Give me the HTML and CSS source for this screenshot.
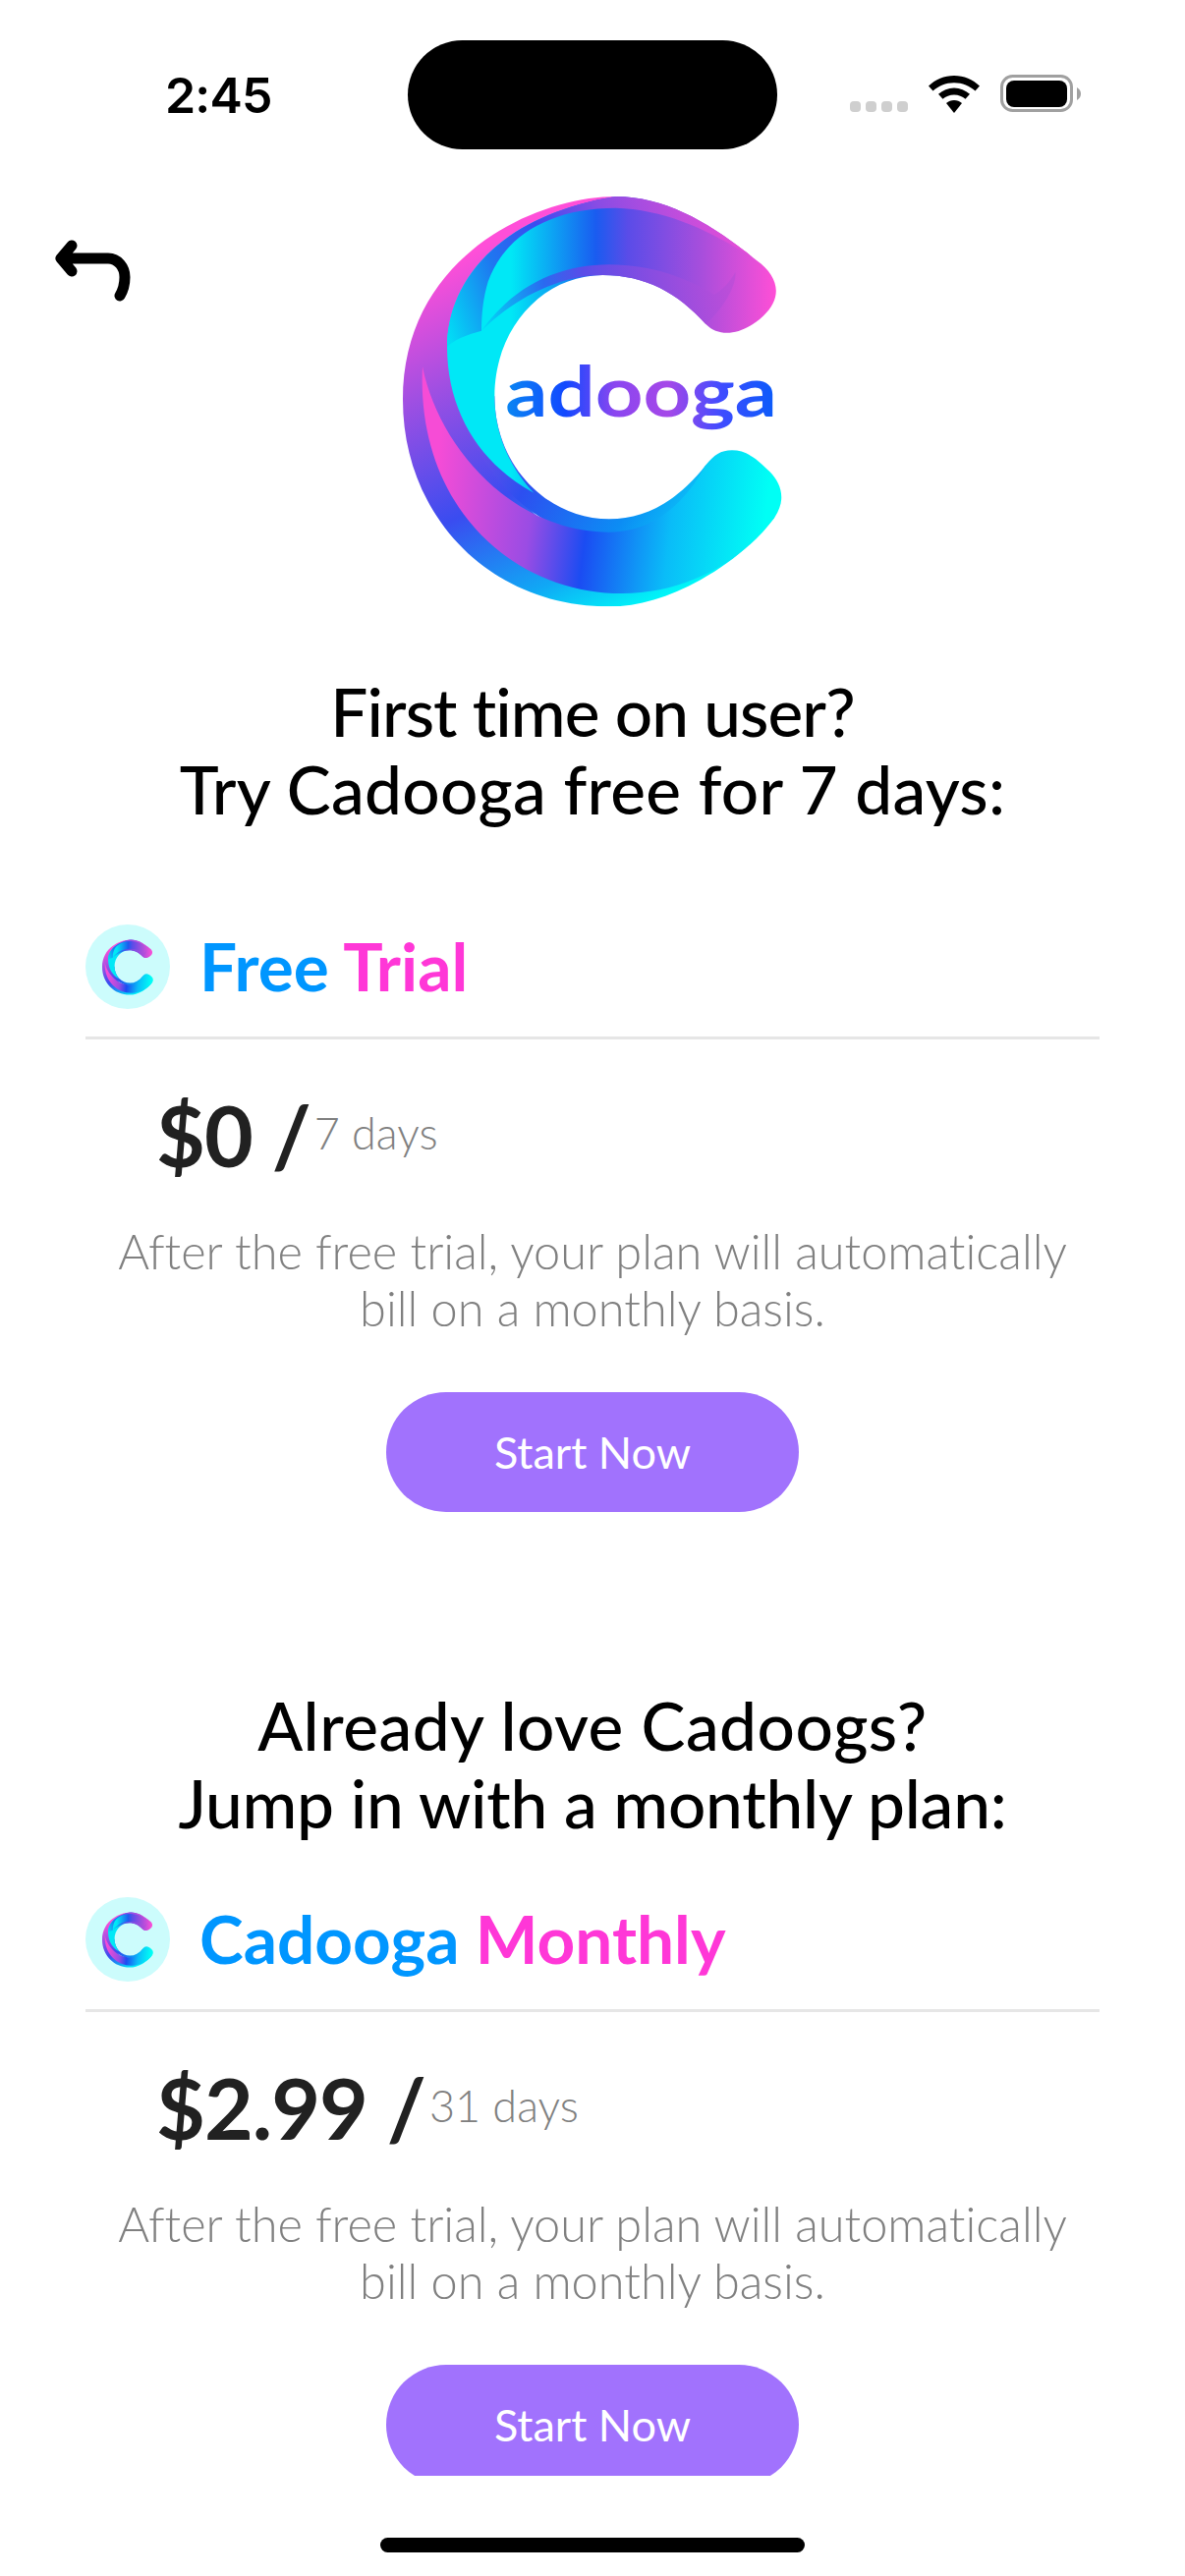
FILE: index.html
```html
<!DOCTYPE html>
<html lang="en">
<head>
<meta charset="utf-8">
<title>Cadooga plans</title>
<link rel="stylesheet" href="styles.css">
</head>
<body>
<svg class="defs" width="0" height="0" aria-hidden="true">
  <defs>
    <linearGradient id="gBack" x1="300" y1="230" x2="800" y2="1320" gradientUnits="userSpaceOnUse">
      <stop offset="0" stop-color="#ff4fd8"/>
      <stop offset=".28" stop-color="#a04fe2"/>
      <stop offset=".6" stop-color="#3a4cf0"/>
      <stop offset=".85" stop-color="#10a8f5"/>
      <stop offset="1" stop-color="#00f6f8"/>
    </linearGradient>
    <linearGradient id="gBottom" x1="190" y1="900" x2="1200" y2="1030" gradientUnits="userSpaceOnUse">
      <stop offset="0" stop-color="#f64cd6"/>
      <stop offset=".3" stop-color="#9a4ce4"/>
      <stop offset=".47" stop-color="#1b4cf2"/>
      <stop offset=".72" stop-color="#0abcf8"/>
      <stop offset="1" stop-color="#00fff5"/>
    </linearGradient>
    <linearGradient id="gStrip" x1="230" y1="640" x2="1000" y2="1060" gradientUnits="userSpaceOnUse">
      <stop offset="0" stop-color="#a04ee2"/>
      <stop offset=".4" stop-color="#2d4ff0"/>
      <stop offset=".75" stop-color="#0c8cf4"/>
      <stop offset="1" stop-color="#0ad0f8"/>
    </linearGradient>
    <linearGradient id="gTop" x1="420" y1="340" x2="1230" y2="340" gradientUnits="userSpaceOnUse">
      <stop offset="0" stop-color="#00e8f6"/>
      <stop offset=".32" stop-color="#1a5cf0"/>
      <stop offset=".44" stop-color="#5a4ce8"/>
      <stop offset=".72" stop-color="#a84edc"/>
      <stop offset="1" stop-color="#ff4fd6"/>
    </linearGradient>
    <linearGradient id="gTopEdge" x1="225" y1="500" x2="1100" y2="200" gradientUnits="userSpaceOnUse">
      <stop offset="0" stop-color="#00e0f6"/>
      <stop offset=".22" stop-color="#1e78f0"/>
      <stop offset=".4" stop-color="#3a4cf0"/>
      <stop offset=".62" stop-color="#8a4ce4"/>
      <stop offset="1" stop-color="#e04ed8"/>
    </linearGradient>
    <linearGradient id="gTopShade" x1="330" y1="420" x2="1100" y2="300" gradientUnits="userSpaceOnUse">
      <stop offset="0" stop-color="#00d8f6"/>
      <stop offset=".26" stop-color="#2a6af0"/>
      <stop offset=".42" stop-color="#5a4ce8"/>
      <stop offset="1" stop-color="#c04ed8"/>
    </linearGradient>
    <linearGradient id="gWord" x1="405" y1="0" x2="1230" y2="0" gradientUnits="userSpaceOnUse">
      <stop offset="0" stop-color="#0a86f2"/>
      <stop offset=".22" stop-color="#1248ff"/>
      <stop offset=".4" stop-color="#8a46f0"/>
      <stop offset=".6" stop-color="#a548e8"/>
      <stop offset=".8" stop-color="#3e4cff"/>
      <stop offset="1" stop-color="#0a5cfa"/>
    </linearGradient>
    <symbol id="cMark" viewBox="90 60 1160 1252">
      <path fill="url(#gBack)" d="M740 60C500 60 90 240 90 680C90 1030 350 1312 720 1312C810 1312 900 1285 1000 1230C1090 1180 1160 1120 1225 1040L720 1180C500 1100 300 850 300 600C300 400 500 120 740 60Z"/>
      <path fill="url(#gStrip)" d="M225 560L370 670C370 880 530 1045 720 1045C830 1045 930 990 1015 880L1030 920C950 1040 830 1100 720 1100C480 1100 280 880 225 560Z"/>
      <path fill="url(#gBottom)" d="M150 580C200 830 430 1085 720 1085C850 1085 950 1000 1015 880C1040 850 1060 835 1095 835C1135 835 1165 855 1210 900C1245 935 1262 985 1225 1040C1130 1170 960 1272 760 1272C420 1272 130 1000 150 580Z"/>
      <path fill="url(#gTop)" d="M225 520C225 330 370 120 740 60C900 60 1040 150 1170 255C1240 305 1250 370 1190 425C1130 480 1060 495 1015 450C930 355 830 300 700 300C520 300 370 460 370 670C370 790 420 890 490 965C330 880 225 720 225 520Z"/>
      <path fill="url(#gTopEdge)" d="M225 520C225 330 370 120 740 60C900 60 1040 150 1170 255C1040 170 900 100 740 95C540 95 400 180 350 320C335 370 330 420 330 470C290 480 240 500 225 520Z"/>
      <path fill="url(#gTopShade)" d="M330 470C430 330 570 268 720 268C850 268 960 310 1040 360C1060 350 1090 320 1105 290C1110 330 1070 400 1015 450C930 355 830 300 700 300C560 300 420 380 330 470Z"/>
    </symbol>
  </defs>
</svg>

<main class="screen">
  <header class="status">
    <div class="status-left"><span class="time">2:45</span></div>
    <div class="island"></div>
    <div class="status-right">
      <div class="signal"><i></i><i></i><i></i><i></i></div>
      <svg class="wifi" viewBox="0 0 52 38" aria-hidden="true">
        <path d="M26 0C16 0 7 4 0 10.500L4.500 15.500C10 10.500 17.500 7.200 26 7.200S42 10.500 47.500 15.500L52 10.500C45 4 36 0 26 0Z"/>
        <path d="M26 12.500C20 12.500 14.500 14.800 10 18.800L14.500 23.800C17.500 21.200 21.500 19.600 26 19.600S34.500 21.200 37.500 23.800L42 18.800C37.500 14.800 32 12.500 26 12.500Z"/>
        <path d="M26 25C23 25 20.300 26 18 28L26 38L34 28C31.700 26 29 25 26 25Z"/>
      </svg>
      <svg class="battery" viewBox="0 0 82 39" aria-hidden="true">
        <rect x="1.500" y="1.500" width="71" height="35" rx="11" fill="none" stroke="#a0a0a0" stroke-width="3"/>
        <rect x="6" y="6" width="62" height="27" rx="8"/>
        <path d="M78 13V26C81 24 82 22 82 19.500C82 17 81 15 78 13Z" fill="#a0a0a0"/>
      </svg>
    </div>
  </header>

  <div class="hero">
    <button class="back" type="button" aria-label="Back">
      <svg viewBox="0 0 90 80" aria-hidden="true">
        <path d="M20 8L9 21L20 34M9 21H57C67 21 74 30 74 40C74 48 72 54 69 59"/>
      </svg>
    </button>
    <svg class="logo" viewBox="0 0 1338 1380" role="img" aria-label="Cadooga logo">
      <use href="#cMark" x="90" y="60" width="1160" height="1252"/>
      <text class="logo-word" x="403" y="733" textLength="830" lengthAdjust="spacingAndGlyphs" fill="url(#gWord)">adooga</text>
    </svg>
  </div>

  <h2 class="intro intro-first"><span class="line-a">First time on user?</span><br><span class="line-b">Try Cadooga free for 7 days:</span></h2>
  <section class="plan">
    <div class="plan-head">
      <div class="badge"><svg viewBox="0 0 52 65" preserveAspectRatio="none" aria-hidden="true"><use href="#cMark" width="52" height="65"/></svg></div>
      <h3 class="plan-name"><span class="blue">Free</span> <span class="pink">Trial</span></h3>
    </div>
    <div class="price"><strong>$0 /</strong><span>7 days</span></div>
    <p class="note">After the free trial, your plan will automatically<br>bill on a monthly basis.</p>
    <button class="cta" type="button">Start Now</button>
  </section>

  <h2 class="intro intro-second"><span class="line-c">Already love Cadoogs?</span><br><span class="line-d">Jump in with a monthly plan:</span></h2>
  <section class="plan">
    <div class="plan-head">
      <div class="badge"><svg viewBox="0 0 52 65" preserveAspectRatio="none" aria-hidden="true"><use href="#cMark" width="52" height="65"/></svg></div>
      <h3 class="plan-name"><span class="blue">Cadooga</span> <span class="pink">Monthly</span></h3>
    </div>
    <div class="price"><strong>$2.99 /</strong><span>31 days</span></div>
    <p class="note">After the free trial, your plan will automatically<br>bill on a monthly basis.</p>
    <button class="cta" type="button">Start Now</button>
  </section>
</main>
<div class="home-bar"></div>
</body>
</html>
```
FILE: styles.css
```css
* { box-sizing: border-box; }
html, body { margin: 0; padding: 0; background: #fff; }
body { width: 1206px; height: 2622px; overflow: hidden; font-family: "Lato", "Noto Sans", sans-serif; font-variant-ligatures: none; color: #000; }
.defs { display: block; height: 0; }
.screen { height: 2520px; overflow: hidden; }

.status { height: 180px; padding-top: 41px; display: flex; align-items: flex-start; }
.status-left { width: 415px; padding: 34px 0 0 168px; }
.time { display: block; font-family: "Inter", sans-serif; font-weight: 600; font-size: 50px; line-height: 44px; letter-spacing: -0.8px; }
.island { width: 376px; height: 111px; background: #000; border-radius: 56px; }
.status-right { flex: 1; padding: 35px 0 0 74px; display: flex; align-items: flex-start; }
.signal { display: flex; gap: 5px; margin-top: 27px; }
.signal i { display: block; width: 11px; height: 11px; border-radius: 4px; background: #cfcfcf; }
.wifi { width: 52px; height: 38px; margin: 1px 0 0 21px; fill: #000; }
.battery { width: 82px; height: 39px; margin-left: 21px; fill: #000; }

.hero { position: relative; height: 460px; display: flex; justify-content: center; }
.logo { display: block; width: 446px; height: 460px; }
.logo-word { font-family: "Lato", sans-serif; font-weight: 700; font-size: 210px; }
.back { position: absolute; left: 53px; top: 62px; width: 90px; height: 80px; padding: 0; border: 0; background: none; }
.back svg { display: block; width: 90px; height: 80px; fill: none; stroke: #000; stroke-width: 11; stroke-linecap: round; stroke-linejoin: round; }

.intro { margin: 0; text-align: center; font-weight: 500; font-size: 67.500px; line-height: 79px; color: #000; }
.line-a { letter-spacing: -0.9px; }
.line-b { letter-spacing: 0.3px; }
.line-c { letter-spacing: 0.5px; }
.line-d { letter-spacing: -0.2px; }
.intro-first { margin-top: 44px; }
.intro-second { margin-top: 177px; }
.intro-first + .plan { margin-top: 99px; }
.intro-second + .plan { margin-top: 57px; }

.plan { margin-left: 87px; width: 1032px; display: flex; flex-direction: column; align-items: center; }
.plan-head { align-self: stretch; display: flex; align-items: center; gap: 30px; padding-bottom: 28px; border-bottom: 3px solid #e6e6e6; }
.badge { width: 86px; height: 86px; border-radius: 50%; background: #ccfcfc; display: flex; align-items: center; justify-content: center; }
.badge svg { display: block; width: 52px; height: 65px; }
.plan-name { margin: 0; font-size: 67.500px; line-height: 78px; padding-bottom: 2px; font-weight: 700; }
.blue { color: #0096ff; }
.pink { color: #ff37d7; }

.price { align-self: stretch; margin-top: 44px; padding-left: 72px; display: flex; align-items: center; gap: 4px; }
.price strong { font-size: 86px; line-height: 106px; font-weight: 700; color: #212121; letter-spacing: -1px; }
.price span { font-size: 45px; line-height: 50px; margin-bottom: 5px; font-weight: 300; color: #808080; }

.note { margin: 36px 0 0; text-align: center; font-size: 48.700px; line-height: 58px; font-weight: 300; color: #808080; }
.cta { margin-top: 57px; width: 420px; height: 122px; border: 0; border-radius: 61px; background: #a172fd; color: #fff; font-family: inherit; font-size: 45px; font-weight: 400; }

.home-bar { width: 432px; height: 15px; margin: 63px 0 0 387px; border-radius: 8px; background: #000; }
```
